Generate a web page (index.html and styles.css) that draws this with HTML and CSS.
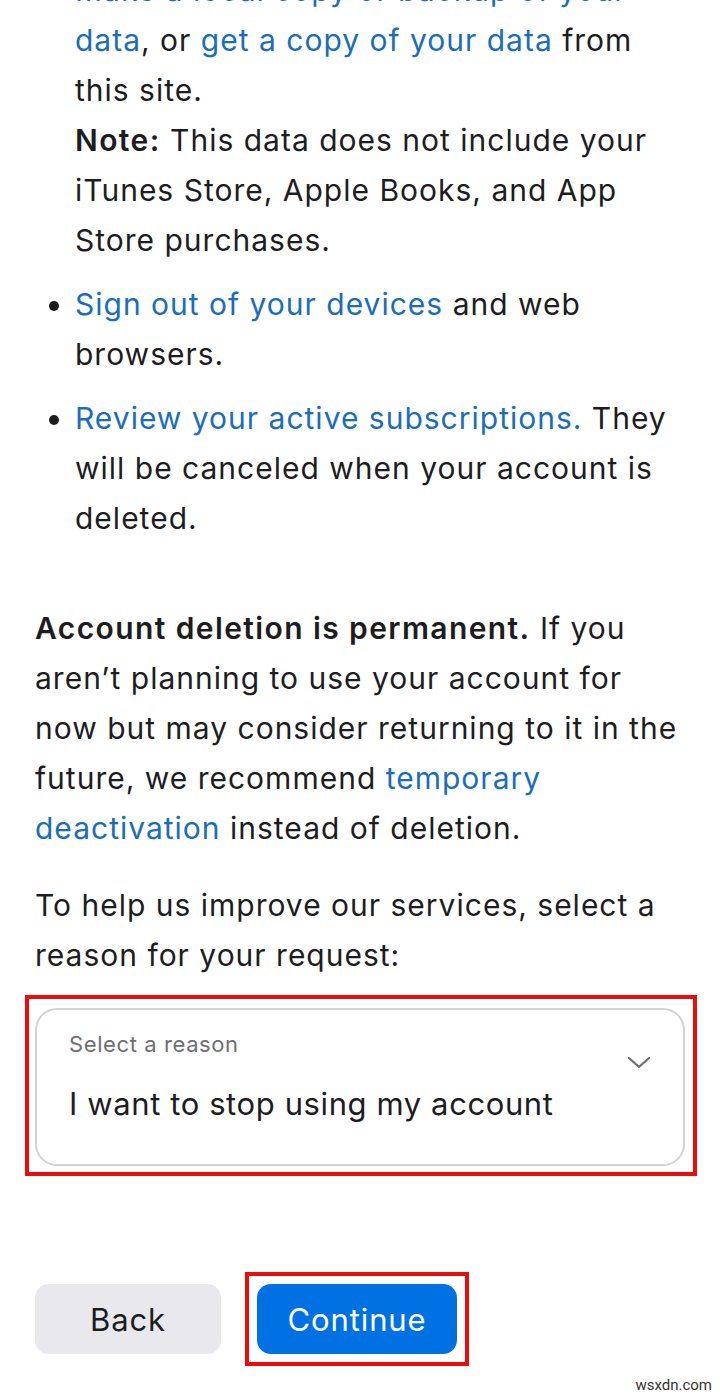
FILE: index.html
```html
<!DOCTYPE html>
<html lang="en">
<head>
<meta charset="utf-8">
<title>Delete account</title>
<link rel="stylesheet" href="styles.css">
</head>
<body>
<main class="page">
  <ul class="list">
    <li><a href="#">Make a local copy or backup of your data</a>, or <a href="#">get a copy of your data</a> from this site.<br><b>Note:</b> This data does not include your iTunes Store, Apple Books, and App Store purchases.</li>
    <li><a href="#">Sign out of your devices</a> and web browsers.</li>
    <li><a href="#">Review your active subscriptions.</a> They will be canceled when your account is deleted.</li>
  </ul>
  <p class="para perm"><b>Account deletion is permanent.</b> If you aren’t planning to use your account for now but may consider returning to it in the future, we recommend <a href="#">temporary deactivation</a> instead of deletion.</p>
  <p class="para help">To help us improve our services, select a reason for your request:</p>
  <div class="highlight select-hl">
    <div class="select">
      <div class="select-text">
        <span class="select-label">Select a reason</span>
        <span class="select-value">I want to stop using my account</span>
      </div>
      <svg class="chev" width="24" height="14" viewBox="0 0 24 14"><path d="M2 2 L12 11 L22 2" fill="none" stroke="#6e6e73" stroke-width="2.2" stroke-linecap="round" stroke-linejoin="round"/></svg>
    </div>
  </div>
  <div class="buttons">
    <button class="btn back">Back</button>
    <div class="highlight btn-hl">
      <button class="btn cont">Continue</button>
    </div>
  </div>
</main>
<span class="mark">wsxdn.com</span>
</body>
</html>
```
FILE: styles.css
```css
html, body {
  margin: 0;
  padding: 0;
  background: #fff;
}
body {
  position: relative;
  height: 1395px;
  overflow: hidden;
  font-family: Inter, Roboto, "Liberation Sans", sans-serif;
  color: #1d1d1f;
}
.page {
  padding: 0 35px;
  margin-top: -35px;
  font-size: 30px;
  line-height: 50px;
  letter-spacing: 1px;
}
a {
  color: #1a6dbd;
  text-decoration: none;
}
b {
  font-weight: 600;
  letter-spacing: 1.4px;
}
.list {
  margin: 0;
  padding-left: 40px;
}
.list li {
  margin-bottom: 14px;
}
.list li:last-child {
  margin-bottom: 0;
}
.para {
  margin: 0;
}
.perm {
  margin-top: 60px;
}
.help {
  margin-top: 27px;
}
.highlight {
  border: 4px solid #ec0a0a;
}
.select-hl {
  margin: 15px -12px 0 -10px;
  padding: 9px 8px 6px 6px;
}
.select {
  height: 158px;
  box-sizing: border-box;
  border: 2px solid #d2d2d7;
  border-radius: 22px;
  display: flex;
  align-items: flex-start;
  justify-content: space-between;
  padding: 0 32px 0 32px;
  letter-spacing: 0.6px;
}
.select-text {
  display: flex;
  flex-direction: column;
  padding-top: 16px;
}
.select-label {
  font-size: 22px;
  line-height: 36px;
  color: #6e6e73;
}
.select-value {
  font-size: 31px;
  line-height: 50px;
  margin-top: 17px;
}
.chev {
  margin-top: 46px;
}
.buttons {
  margin-top: 96px;
  display: flex;
  align-items: flex-start;
  gap: 24px;
}
.back {
  margin-top: 12px;
}
.btn-hl {
  padding: 8px;
}
.btn {
  height: 70px;
  border: none;
  border-radius: 14px;
  font-family: Inter, Roboto, "Liberation Sans", sans-serif;
  font-size: 31px;
  letter-spacing: 0.9px;
  padding: 0;
  display: block;
}
.back {
  width: 186px;
  background: #e8e8ed;
  color: #1d1d1f;
}
.cont {
  width: 200px;
  background: #0071e3;
  color: #fff;
}
.mark {
  position: absolute;
  right: 8px;
  bottom: 1px;
  font-size: 15px;
  line-height: 18px;
  color: #333;
  font-family: Roboto, "Liberation Sans", sans-serif;
}
```
